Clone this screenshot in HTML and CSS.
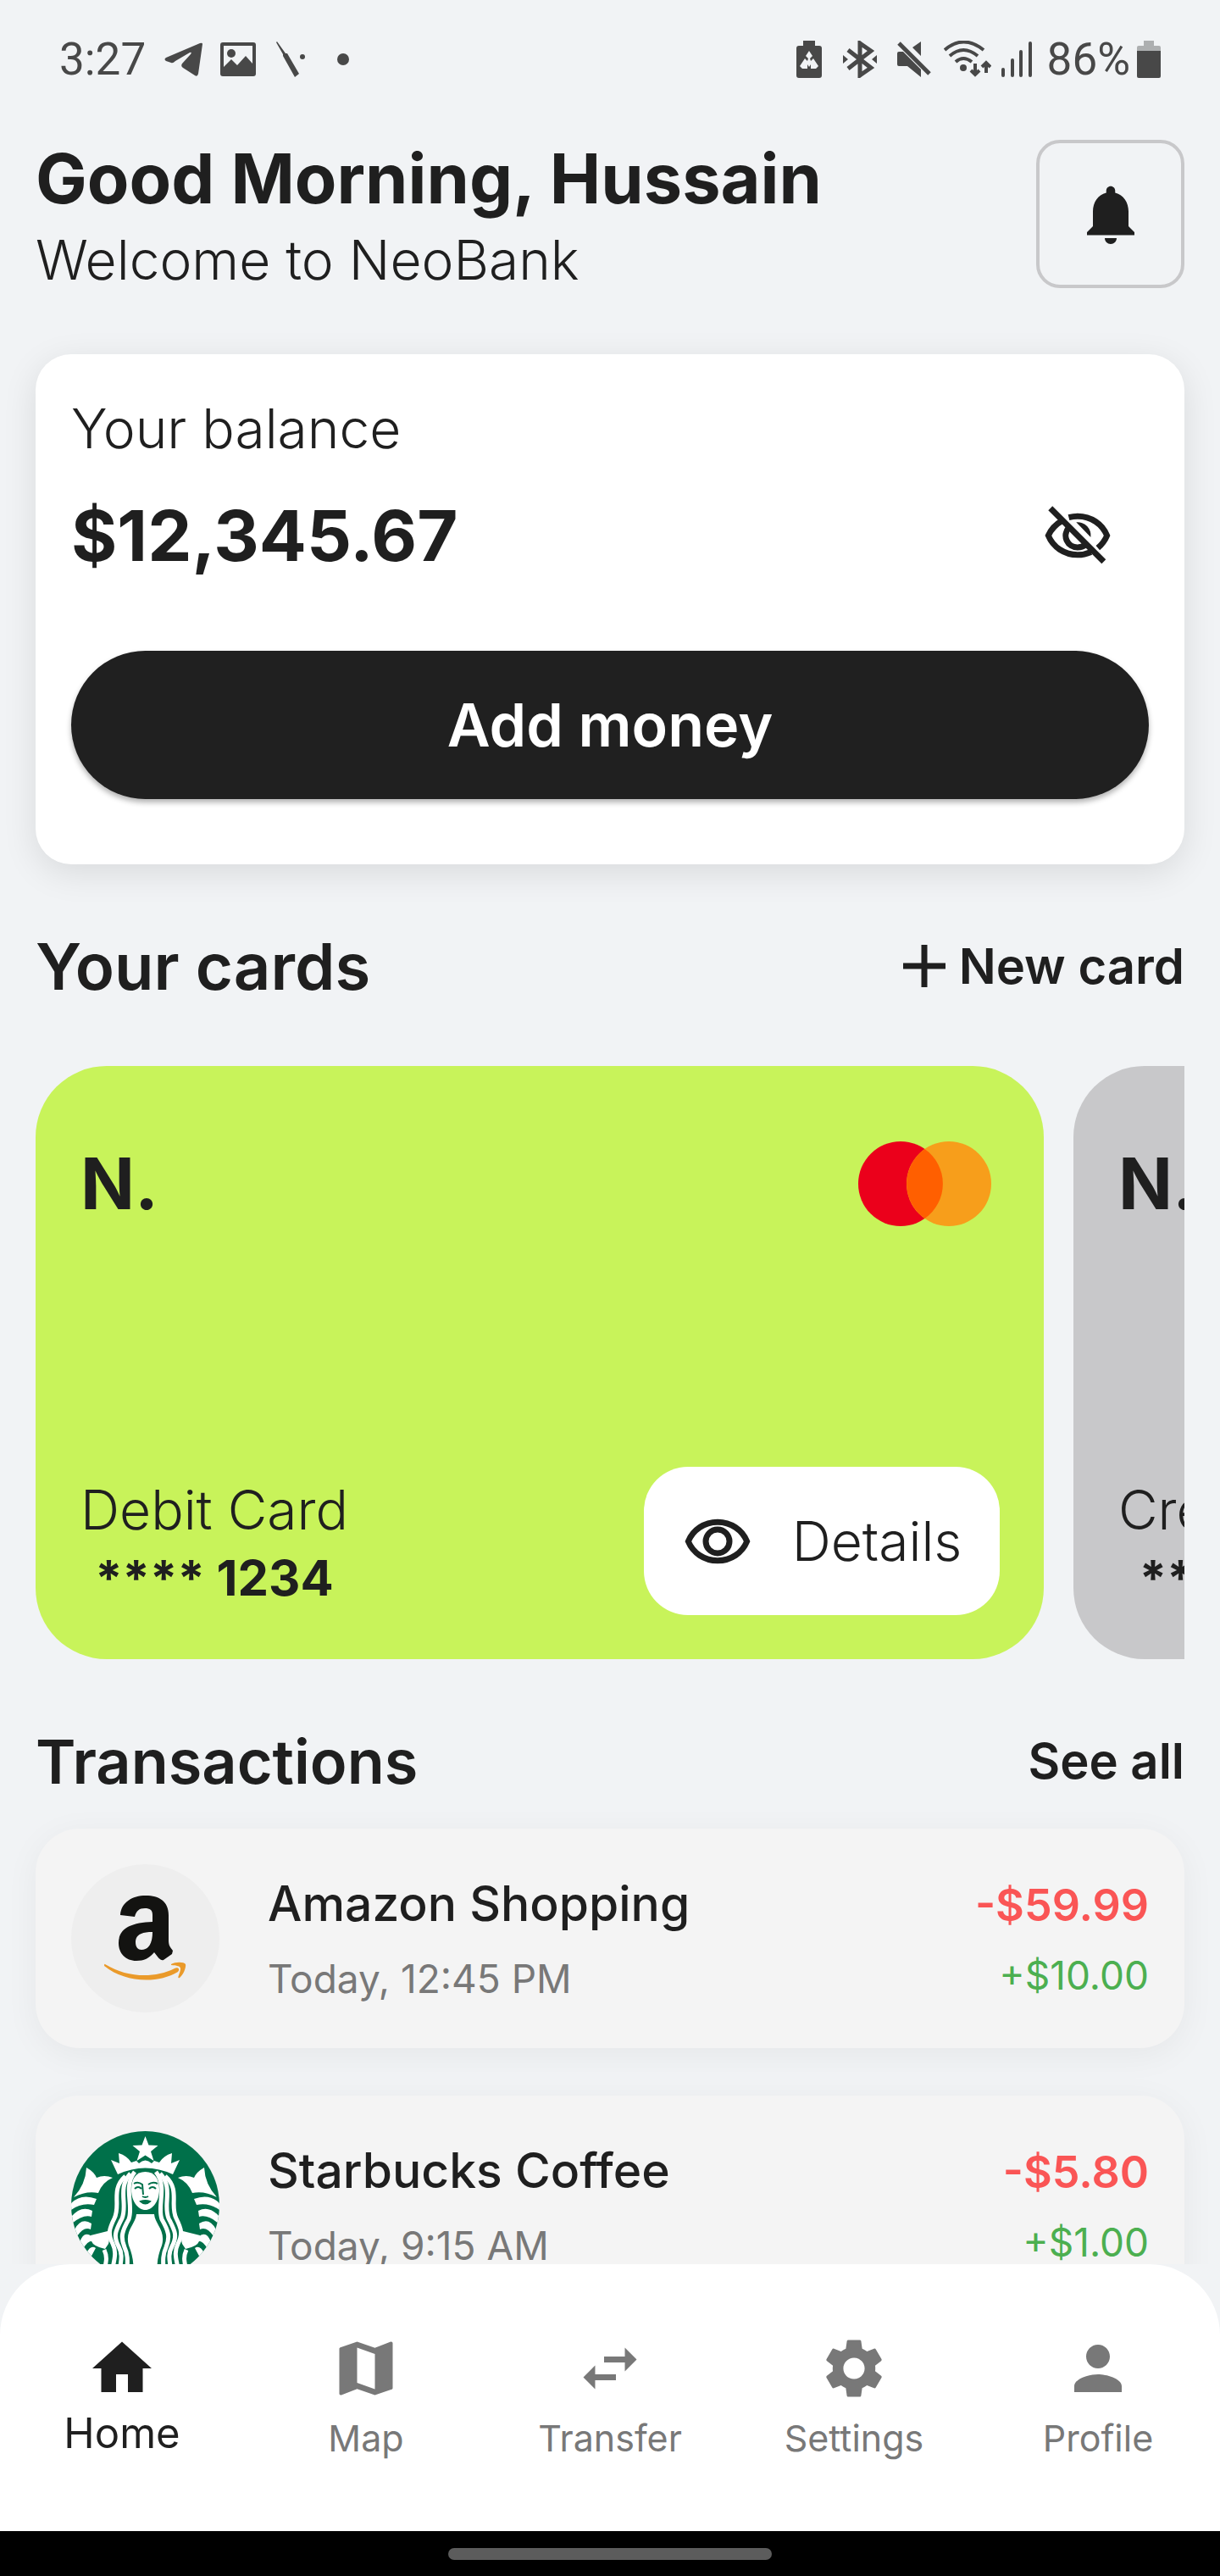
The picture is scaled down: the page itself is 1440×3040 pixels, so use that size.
FILE: index.html
```html
<!DOCTYPE html>
<html lang="en">
<head>
<meta charset="utf-8">
<meta name="viewport" content="width=device-width, initial-scale=1">
<title>NeoBank</title>
<link rel="stylesheet" href="styles.css">
</head>
<body>
<div class="app">
  <div class="status">
    <div class="status-left">
      <span class="status-text">3:27</span>
      <svg class="ic-telegram" width="46" height="40" viewBox="0 0 46 40"><path d="M45 2Q45 0 42 1L2 18Q-1 20 2 22L8 24Q10 25 13 22L30 12Q33 11 31 14L21 25Q19 28 22 30L36 39Q39 41 40 37Z"/></svg>
      <svg class="ic-photo" width="42" height="40" viewBox="0 0 42 40"><path fill-rule="evenodd" d="M3 0H39Q42 0 42 3V37Q42 40 39 40H3Q0 40 0 37V3Q0 0 3 0ZM4 4V29L13 20L20 27L30 16L38 25V4Z"/><circle cx="13" cy="13" r="5"/></svg>
      <svg class="ic-wand" width="36" height="42" viewBox="0 0 36 42"><path d="M1 0L11 14L13 14L27 38L22 42L8 17L8 15L0 1Z"/><circle cx="31" cy="18" r="3"/></svg>
      <svg class="ic-dot" width="14" height="14" viewBox="0 0 14 14"><circle cx="7" cy="7" r="7"/></svg>
    </div>
    <div class="status-right">
      <svg class="ic-saver" width="30" height="44" viewBox="0 0 30 44"><path fill-rule="evenodd" d="M8 0H22V6H27Q30 6 30 9V41Q30 44 27 44H3Q0 44 0 41V9Q0 6 3 6H8ZM15 12L11 18L14 21L13 24L10 21L4 30L7 33H13V28L15 31L17 28V33H23L26 30L20 21L17 24L16 21L19 18Z"/></svg>
      <svg class="ic-bluetooth" width="40" height="44" viewBox="0 0 40 44"><path d="M6 11L33 32L20 41V3L33 12L6 33" fill="none" stroke="currentColor" stroke-width="5"/><path d="M0 17L6 22L0 27ZM40 17L34 22L40 27Z"/></svg>
      <svg class="ic-mute" width="40" height="42" viewBox="0 0 40 42"><path d="M28 0V17L18 7ZM0 14Q0 12 2 12H7L28 33V42L12 29H2Q0 29 0 27Z"/><path d="M2 2L38 38" stroke="currentColor" stroke-width="5"/></svg>
      <svg class="ic-wifi" width="56" height="44" viewBox="0 0 56 44"><g fill="none" stroke="currentColor" stroke-width="4"><path d="M1 11Q23-8 47 11"/><path d="M7 18Q23 4 40 18"/><path d="M14 25Q23 17 33 25"/><path d="M37 27V40M32 35L37 40L42 35M50 38V26M45 31L50 26L55 31"/></g><circle cx="23" cy="32" r="4"/></svg>
      <svg class="ic-signal" width="36" height="42" viewBox="0 0 36 42"><path d="M2 33V40M13 22V40M23 12V40M34 2V40" stroke="currentColor" stroke-width="4" stroke-linecap="round"/></svg>
      <span class="status-text">86%</span>
      <svg class="ic-battery" width="28" height="44" viewBox="0 0 28 44"><path d="M8 0H20V6H26Q28 6 28 8V12H0V8Q0 6 2 6H8Z" opacity=".4"/><path d="M0 12H28V42Q28 44 26 44H2Q0 44 0 42Z"/></svg>
    </div>
  </div>

  <main class="content">
    <header class="header">
      <div>
        <h1 class="greeting">Good Morning, Hussain</h1>
        <p class="light">Welcome to NeoBank</p>
      </div>
      <button class="bell" type="button" aria-label="Notifications">
        <svg width="84" height="84" viewBox="0 0 24 24"><path d="M12 22c1.100 0 2-.9 2-2h-4c0 1.100.89 2 2 2zm6-6v-5c0-3.070-1.640-5.640-4.500-6.320V4c0-.83-.67-1.500-1.500-1.500s-1.500.67-1.500 1.500v.68C7.630 5.360 6 7.920 6 11v5l-2 2v1h16v-1l-2-2z"/></svg>
      </button>
    </header>

    <section class="balance">
      <p class="light">Your balance</p>
      <div class="balance-row">
        <strong class="amount">$12,345.67</strong>
        <button class="hide" type="button" aria-label="Hide balance">
          <svg width="84" height="84" viewBox="0 0 24 24" fill="none" stroke="currentColor" stroke-width="2"><path d="M6.700 7.050A11 11 0 0 0 2.100 12C3.700 15.900 7.500 18.500 12 18.500c1.600 0 3.100-.35 4.500-.95M9 5.900c1-.26 2-.4 3-.4 4.500 0 8.300 2.600 9.900 6.500-.7 1.700-1.800 3.100-3.100 4.200"/><path d="M9 9.300A4 4 0 0 0 12 16c1 0 2-.4 2.700-1"/><path d="M2.800 2.800L20.800 20.800"/><path d="M11.500 7.500A4.500 4.500 0 0 1 16.400 12.600z" fill="currentColor" stroke="none"/></svg>
        </button>
      </div>
      <button class="add" type="button">Add money</button>
    </section>

    <div class="section-head">
      <h2 class="title-lg">Your cards</h2>
      <button class="text-action" type="button">
        <svg width="50" height="50" viewBox="0 0 50 50"><path d="M0 25H50M25 0V50" stroke="currentColor" stroke-width="7"/></svg>
        New card
      </button>
    </div>

    <div class="cards">
      <article class="card card-debit">
        <div class="card-top">
          <span class="logo">N.</span>
          <svg width="158" height="100" viewBox="0 0 158 100"><circle cx="50" cy="50" r="50" fill="#eb001b"/><circle cx="107" cy="50" r="50" fill="#f79e1b"/><path d="M78.500 9a50 50 0 0 1 0 82a50 50 0 0 1 0-82z" fill="#ff5f00"/></svg>
        </div>
        <div class="card-bottom">
          <div class="card-info">
            <p class="light">Debit Card</p>
            <p class="card-number">**** 1234</p>
          </div>
          <button class="details" type="button">
            <svg width="84" height="84" viewBox="0 0 24 24" fill="none" stroke="currentColor" stroke-width="2"><path d="M2.100 12C3.700 8.100 7.500 5.500 12 5.500s8.300 2.600 9.900 6.500c-1.600 3.900-5.400 6.500-9.900 6.500S3.700 15.900 2.100 12z"/><circle cx="12" cy="12" r="4"/></svg>
            Details
          </button>
        </div>
      </article>
      <article class="card card-credit">
        <div class="card-top"><span class="logo">N.</span></div>
        <div class="card-bottom">
          <div class="card-info">
            <p class="light">Credit Card</p>
            <p class="card-number">**** 5678</p>
          </div>
        </div>
      </article>
    </div>

    <div class="section-head section-head-tx">
      <h2 class="title-md">Transactions</h2>
      <a class="text-action" href="#">See all</a>
    </div>

    <ul class="tx-list">
      <li class="tx">
        <svg class="tx-logo" viewBox="0 0 175 175"><circle cx="87.500" cy="87.500" r="87.500" fill="#eee"/><path fill="#131311" fill-rule="evenodd" d="M58 60C59 45 72 37 88 37C104 37 115 44 115 60V90C115 96 117 98 120 102L119 106L109 113C106 114 104 112 98 104C92 111 86 114 77 114C64 114 56 105 56 93C56 76 70 69 96 68V60C96 54 93 52 87 52C80 52 77 55 75 62ZM96 80C82 80 76 84 76 92C76 98 79 101 83 101C91 101 96 94 96 80Z"/><path fill="#ea9a2a" d="M40 118C66 134 98 135 122 123C126 121 129 124 126 127C101 142 62 139 39 120Q39 117 40 118ZM118 118C123 115 133 115 135 118C136 122 132 131 128 134C126 135 126 133 127 131C131 121 130 120 118 119Z"/></svg>
        <div class="tx-main">
          <h3 class="tx-name">Amazon Shopping</h3>
          <p class="tx-time">Today, 12:45 PM</p>
        </div>
        <div class="tx-sums">
          <p class="tx-out">-$59.99</p>
          <p class="tx-in">+$10.00</p>
        </div>
      </li>
      <li class="tx">
        <svg class="tx-logo" viewBox="0 0 175 175">
          <defs><clipPath id="disc"><circle cx="87.500" cy="87.500" r="87.500"/></clipPath></defs>
          <g clip-path="url(#disc)">
            <rect width="175" height="175" fill="#00704a"/>
            <g fill="#fff">
              <path d="M87.500 6L91.500 16.500L102.500 17L94 24L97.500 35L87.500 28.500L77.500 35L81 24L72.500 17L83.500 16.500Z"/>
              <path d="M47 34L57 38L56 26Q66 29 71 37L77 35L80 38Q87.500 31 95 38L98 35L104 37Q109 29 119 26L118 38L128 34L120 51Q87.500 36 55 51Z"/>
              <path d="M18 43Q27 48 30 55Q39 51 49 55Q37 60 32 73Q18 70 3 78Q17 63 18 43ZM157 43Q148 48 145 55Q136 51 126 55Q138 60 143 73Q157 70 172 78Q158 63 157 43Z"/>
              <path id="sb-tail" d="M0 85Q12 73 30 80L27 87Q12 84 0 93ZM0 101Q12 87 25 94L24 101Q14 98 1 109ZM4 116Q12 101 24 109L23 116Q15 112 7 124ZM10 131Q15 117 24 124L27 130Q20 128 14 139ZM18 144Q23 134 29 138L22 151Z"/>
              <use href="#sb-tail" transform="matrix(-1 0 0 1 175 0)"/>
              <path id="sb-hand" d="M23 123L43 118Q46 128 44 133L40 139Q26 136 24 130Z"/>
              <use href="#sb-hand" transform="matrix(-1 0 0 1 175 0)"/>
              <path d="M87.500 48C99 48 104 57 104 69C104 83 96 93 87.500 93C79 93 71 83 71 69C71 57 76 48 87.500 48Z"/>
              <path d="M77 98H98C99 110 112 117 107 135C102 148 100 158 103 175H72C75 158 73 148 68 135C63 117 76 110 77 98Z"/>
            </g>
            <g id="sb-hair" fill="none" stroke="#fff" stroke-width="5">
              <path d="M64 53C46 69 59 87 51 103C45 115 43 121 49 133C56 147 47 158 48 175"/>
              <path d="M70 50C54 67 67 87 60 103C53 117 49 123 56 136C63 149 56 158 57 175"/>
              <path d="M75 48C61 66 74 88 68 104C60 118 58 125 63 137C69 150 65 160 66 175"/>
              <path d="M38 175C38 160 45 153 39 140"/>
            </g>
            <use href="#sb-hair" transform="matrix(-1 0 0 1 175 0)"/>
            <g fill="none" stroke="#00704a" stroke-width="2"><path d="M74 62Q79 59 84 63L85 75M91 63Q96 59 102 62M75 68Q79 64 83 68M92 68Q96 64 100 68M84 77Q87.500 79 91 77"/><path d="M82 83Q87.500 88 93 83Q87.500 81 82 83Z" fill="#00704a"/></g>
          </g>
        </svg>
        <div class="tx-main">
          <h3 class="tx-name">Starbucks Coffee</h3>
          <p class="tx-time">Today, 9:15 AM</p>
        </div>
        <div class="tx-sums">
          <p class="tx-out">-$5.80</p>
          <p class="tx-in">+$1.00</p>
        </div>
      </li>
    </ul>
  </main>

  <nav class="nav">
    <a class="nav-item nav-active" href="#" aria-current="page">
      <svg width="84" height="84" viewBox="0 0 24 24"><path d="M10 20v-6h4v6h5v-8h3L12 3 2 12h3v8z"/></svg>
      <span>Home</span>
    </a>
    <a class="nav-item" href="#">
      <svg width="84" height="84" viewBox="0 0 24 24"><path d="M20.500 3l-.16.030L15 5.100 9 3 3.360 4.900c-.21.070-.36.250-.36.480V20.500c0 .28.220.5.500.5l.16-.03L9 18.900l6 2.100 5.640-1.900c.21-.07.360-.25.360-.48V3.500c0-.28-.22-.5-.5-.5zM15 19l-6-2.110V5l6 2.110V19z"/></svg>
      <span>Map</span>
    </a>
    <a class="nav-item" href="#">
      <svg width="84" height="84" viewBox="0 0 24 24"><path d="M6.990 11L3 15l3.990 4v-3H14v-2H6.990v-3zM21 9l-3.990-4v3H10v2h7.010v3L21 9z"/></svg>
      <span>Transfer</span>
    </a>
    <a class="nav-item" href="#">
      <svg width="84" height="84" viewBox="0 0 24 24"><path d="M19.140 12.940c.04-.3.060-.61.060-.94 0-.32-.02-.64-.07-.94l2.030-1.580c.18-.14.230-.41.120-.61l-1.920-3.320c-.12-.22-.37-.29-.59-.22l-2.390.96c-.5-.38-1.030-.7-1.620-.94l-.36-2.540c-.04-.24-.24-.41-.48-.41h-3.840c-.24 0-.43.170-.47.410l-.36 2.540c-.59.240-1.130.57-1.620.94l-2.390-.96c-.22-.08-.47 0-.59.220L2.740 8.870c-.12.210-.08.470.12.610l2.030 1.580c-.05.3-.09.630-.09.940s.02.640.07.940l-2.030 1.580c-.18.140-.23.410-.12.610l1.920 3.320c.12.220.37.290.59.220l2.390-.96c.5.380 1.030.7 1.620.94l.36 2.540c.05.240.24.410.48.410h3.840c.24 0 .44-.17.470-.41l.36-2.540c.59-.24 1.130-.56 1.620-.94l2.390.96c.22.080.47 0 .59-.22l1.920-3.320c.12-.22.070-.47-.12-.61l-2.010-1.580zM12 15.600c-1.980 0-3.600-1.620-3.600-3.600s1.620-3.600 3.600-3.600 3.600 1.620 3.600 3.600-1.620 3.600-3.600 3.600z"/></svg>
      <span>Settings</span>
    </a>
    <a class="nav-item" href="#">
      <svg width="84" height="84" viewBox="0 0 24 24"><path d="M12 12c2.210 0 4-1.790 4-4s-1.790-4-4-4-4 1.790-4 4 1.790 4 4 4zm0 2c-2.670 0-8 1.340-8 4v2h16v-2c0-2.660-5.330-4-8-4z"/></svg>
      <span>Profile</span>
    </a>
  </nav>
  <div class="gesture"><span class="handle"></span></div>
</div>
</body>
</html>
```
FILE: styles.css
```css
* { box-sizing: border-box; }

body {
  margin: 0;
  background: #f1f3f5;
  color: #1f1f1f;
  font-family: Inter, "Noto Sans", sans-serif;
}

h1, h2, h3, p, ul { margin: 0; padding: 0; }

svg { display: block; flex: none; fill: currentColor; }
svg[fill="none"] { fill: none; }

button {
  border: 0;
  padding: 0;
  background: none;
  color: inherit;
  font: inherit;
  cursor: pointer;
}

a { color: inherit; text-decoration: none; }

.app {
  display: flex;
  flex-direction: column;
  height: 100vh;
}

/* Status bar */
.status {
  display: flex;
  flex: none;
  justify-content: space-between;
  height: 140px;
  padding: 0 70px;
  color: #484848;
}

.status-left, .status-right { display: flex; align-items: center; }
.status-text { font-family: Roboto, sans-serif; font-size: 53px; }
.ic-telegram { margin-left: 22px; }
.ic-photo { margin-left: 20px; }
.ic-wand { margin-left: 24px; }
.ic-dot { margin-left: 36px; }
.ic-bluetooth { margin-left: 25px; }
.ic-mute { margin-left: 24px; }
.ic-wifi { margin-left: 15px; }
.ic-signal { margin: 0 18px 0 12px; }
.ic-battery { margin-left: 8px; }

/* Scrolling content */
.content {
  flex: 1;
  min-height: 0;
  padding: 25px 42px 0;
  overflow: hidden;
}

.light { font-size: 64px; font-weight: 300; }

.header { display: flex; justify-content: space-between; align-items: flex-start; }
.greeting { font-size: 81px; line-height: 92px; font-weight: 700; }
.header .light { line-height: 100px; }

.bell {
  display: grid;
  place-items: center;
  width: 175px;
  height: 175px;
  border: 4px solid #c8c8ca;
  border-radius: 28px;
}

.balance {
  margin-top: 61px;
  padding: 44px 42px 77px;
  border-radius: 42px;
  background: #fff;
  box-shadow: 0 10px 40px rgba(0, 0, 0, 0.1);
}

.balance .light { line-height: 88px; }

.balance-row {
  display: flex;
  justify-content: space-between;
  align-items: center;
  margin: 26px 0 80px;
  padding-right: 42px;
}

.amount { font-size: 83px; line-height: 112px; font-weight: 700; }

.add {
  width: 100%;
  height: 175px;
  border-radius: 88px;
  background: #202020;
  box-shadow: 0 4px 6px rgba(0, 0, 0, 0.3);
  color: #fff;
  font-size: 70px;
  font-weight: 600;
}

.section-head {
  display: flex;
  justify-content: space-between;
  align-items: center;
  height: 120px;
  margin: 60px 0 58px;
}

.section-head-tx { margin-bottom: 20px; }
.title-lg { font-size: 76px; font-weight: 600; }
.title-md { font-size: 72px; font-weight: 600; }

.text-action {
  display: flex;
  align-items: center;
  gap: 16px;
  font-size: 58px;
  font-weight: 600;
}

/* Bank cards */
.cards { display: flex; gap: 35px; overflow: hidden; }

.card {
  display: flex;
  flex: none;
  flex-direction: column;
  justify-content: space-between;
  width: calc(100% - 166px);
  height: 700px;
  padding: 89px 52px 52px 53px;
  border-radius: 84px;
}

.card-debit { background: #c8f35a; }
.card-credit { background: #c8c8ca; }

.card-top, .card-bottom { display: flex; justify-content: space-between; align-items: center; }
.card-top { padding-right: 9px; }
.card-bottom { min-height: 175px; }
.card-info { padding-top: 6px; line-height: 80px; text-align: center; }
.logo { font-size: 84px; line-height: 100px; font-weight: 700; }
.card-number { font-size: 58px; font-weight: 700; }

.details {
  display: flex;
  justify-content: center;
  align-items: center;
  gap: 46px;
  width: 420px;
  height: 175px;
  border-radius: 52px;
  background: #fff;
  font-size: 64px;
  font-weight: 300;
}

/* Transactions */
.tx-list { display: grid; gap: 56px; list-style: none; }

.tx {
  display: flex;
  align-items: center;
  padding: 42px;
  border-radius: 52px;
  background: #f4f4f4;
  box-shadow: 0 8px 40px rgba(0, 0, 0, 0.05);
}

.tx-logo { width: 175px; height: 175px; }
.tx-main { flex: 1; padding: 6px 0 0 57px; margin: -10px 0; line-height: 88px; }
.tx-name { font-size: 57px; font-weight: 500; }
.tx-time { color: #787878; font-size: 46px; }
.tx-sums { padding-top: 4px; line-height: 82px; text-align: right; }
.tx-out { color: #fa5555; font-size: 52px; font-weight: 600; }
.tx-in { color: #4caf50; font-size: 46px; }

/* Bottom navigation */
.nav {
  display: grid;
  grid-template-columns: repeat(5, 1fr);
  flex: none;
  padding: 81px 0 70px;
  border-radius: 84px 84px 0 0;
  background: #fff;
}

.nav-item {
  display: flex;
  flex-direction: column;
  align-items: center;
  color: #787878;
  font-size: 43px;
  line-height: 80px;
}

.nav-active { color: #1f1f1f; font-size: 49px; line-height: 70px; }

.gesture {
  display: grid;
  place-items: center;
  flex: none;
  height: 53px;
  background: #000;
}

.handle { width: 382px; height: 14px; border-radius: 7px; background: #5c5c5c; }
```
